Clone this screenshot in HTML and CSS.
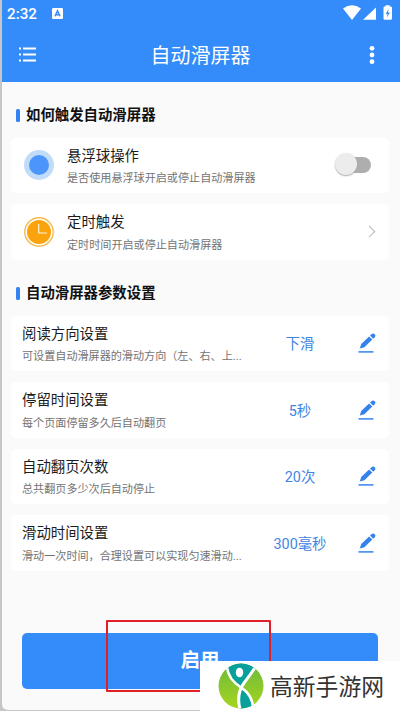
FILE: index.html
```html
<!DOCTYPE html>
<html lang="zh-CN">
<head>
<meta charset="utf-8">
<title>自动滑屏器</title>
<link rel="stylesheet" href="styles.css">
</head>
<body>
<svg class="defs" aria-hidden="true">
  <symbol id="pen" viewBox="0 0 18 22">
    <path d="M1.8 16.6 3.2 12 11.1 4.4 14.3 7.5 6.4 15.2Z M12 3.6 13.2 2.4Q15.1.7 16.7 2.2 18.2 3.8 16.5 5.6L15.2 6.8Z" fill="#3582ed"/>
    <path d="M.5 19.9h15" stroke="#3582ed" stroke-width="1.5"/>
  </symbol>
</svg>
<div class="screen">
  <header class="header">
    <div class="status">
      <span class="time">2:32</span>
      <svg class="badge" viewBox="0 0 11 11"><rect width="11" height="11" rx="1.3" fill="#fff"/><path d="M3 8.3 5.5 2.8 8 8.3M4 6.7h3" fill="none" stroke="#348bfa" stroke-width="1.5"/></svg>
      <svg class="signals" viewBox="0 0 50 16">
        <path d="M0 3.6Q9-3.2 18 3.6L9 15Z" fill="#fff"/>
        <path d="M20 14.8 33 2.4V14.8Z" fill="#fff"/>
        <path d="M42.5 1.6V.3h4.2v1.3h1q1.3 0 1.3 1.3v10.6q0 1.3-1.3 1.3h-5.9q-1.3 0-1.3-1.3V2.9q0-1.3 1.3-1.3Z" fill="#fff"/>
        <path d="M45.6 4 42.7 8.9h1.8L43.9 12.5l3-5h-1.9Z" fill="#348bfa"/>
      </svg>
    </div>
    <div class="bar">
      <svg class="list" viewBox="0 0 17 15"><path d="M4 1.5h13M4 7.5h13M4 13.5h13" stroke="#fff" stroke-width="2.2"/><path d="M0 1.5h2M0 7.5h2M0 13.5h2" stroke="#fff" stroke-width="2"/></svg>
      <h1>自动滑屏器</h1>
      <svg class="more" viewBox="0 0 6 20"><circle cx="3" cy="3.3" r="2.4"/><circle cx="3" cy="10" r="2.4"/><circle cx="3" cy="16.7" r="2.4"/></svg>
    </div>
  </header>
  <main>
    <h2 class="first">如何触发自动滑屏器</h2>
    <section class="cards">
      <div class="card trigger">
        <svg class="icon" viewBox="0 0 30 30"><circle cx="15" cy="15" r="15" fill="#c1dcf9"/><circle cx="15" cy="15" r="10" fill="#4c96fb"/></svg>
        <div class="copy"><h3>悬浮球操作</h3><p>是否使用悬浮球开启或停止自动滑屏器</p></div>
        <span class="switch"></span>
      </div>
      <div class="card trigger">
        <svg class="icon" viewBox="0 0 30 30"><circle cx="15" cy="15" r="14.2" fill="#fff" stroke="#f6b94a" stroke-width="1.4"/><circle cx="15" cy="15" r="12" fill="#fba30d"/><path d="M14.7 7v9H23" fill="none" stroke="#fff3d8" stroke-width="1.2"/></svg>
        <div class="copy"><h3>定时触发</h3><p>定时时间开启或停止自动滑屏器</p></div>
        <svg class="chevron" viewBox="0 0 8 13"><path d="M1 .8 6.8 6.5 1 12.2" fill="none" stroke="#bdbdbd" stroke-width="1.1"/></svg>
      </div>
    </section>
    <h2 class="second">自动滑屏器参数设置</h2>
    <section class="cards">
      <div class="card setting">
        <div class="copy"><h3>阅读方向设置</h3><p>可设置自动滑屏器的滑动方向（左、右、上...</p></div>
        <span class="value">下滑</span><svg class="pen"><use href="#pen"/></svg>
      </div>
      <div class="card setting">
        <div class="copy"><h3>停留时间设置</h3><p>每个页面停留多久后自动翻页</p></div>
        <span class="value">5秒</span><svg class="pen"><use href="#pen"/></svg>
      </div>
      <div class="card setting">
        <div class="copy"><h3>自动翻页次数</h3><p>总共翻页多少次后自动停止</p></div>
        <span class="value">20次</span><svg class="pen"><use href="#pen"/></svg>
      </div>
      <div class="card setting">
        <div class="copy"><h3>滑动时间设置</h3><p>滑动一次时间，合理设置可以实现匀速滑动...</p></div>
        <span class="value">300毫秒</span><svg class="pen"><use href="#pen"/></svg>
      </div>
    </section>
    <button class="start" type="button">启用</button>
  </main>
  <div class="marker"></div>
  <div class="watermark">
    <svg class="logo" viewBox="0 0 46 46">
      <defs>
        <clipPath id="disc"><circle cx="23" cy="23" r="22.5"/></clipPath>
        <linearGradient id="leaf" x1="0" y1="0" x2="0" y2="1"><stop offset="0" stop-color="#6dba3c"/><stop offset="1" stop-color="#a6d51f"/></linearGradient>
      </defs>
      <g clip-path="url(#disc)">
        <rect width="46" height="46" fill="url(#leaf)"/>
        <path d="M8 0H40Q35 12 24 24 12 17 8 0Z" fill="#07a09a"/>
        <path d="M24 26Q34 34 35 46H22Q18 37 24 26Z" fill="#07a09a"/>
        <path d="M9 4Q10 16 23 24.5 35 32 35 46" fill="none" stroke="#fff" stroke-width="2.6"/>
        <path d="M38 3Q33 11 26 20 18 31 22 46" fill="none" stroke="#fff" stroke-width="3"/>
        <ellipse cx="21.5" cy="9.5" rx="3.7" ry="4.8" fill="#fff"/>
      </g>
    </svg>
    <span>高新手游网</span>
  </div>
</div>
</body>
</html>
```
FILE: styles.css
```css
* { box-sizing: border-box; margin: 0; padding: 0; }
body {
  width: 400px;
  height: 711px;
  overflow: hidden;
  background: #c6c6c8;
  font-family: Roboto, "Noto Sans CJK SC", sans-serif;
}
.defs { position: absolute; width: 0; height: 0; }
.screen {
  position: relative;
  height: 711px;
  margin-left: 2px;
  background: #fafafa;
  border-bottom: 1px solid #c6c6c8;
  border-radius: 0 0 0 6px;
}
.header { height: 82px; background: #348bfa; color: #fff; }
.status { display: flex; align-items: center; height: 28px; padding: 0 7px 0 5px; }
.time { width: 45px; font-size: 15.2px; font-weight: 500; }
.badge { width: 11px; height: 11px; margin-top: -1px; }
.signals { width: 50px; height: 16px; margin: -2px 0 0 auto; }
.bar { display: flex; align-items: center; justify-content: space-between; height: 54px; padding: 0 25px 0 17px; }
.list { width: 17px; height: 15px; margin-top: -1px; }
.more { width: 6px; height: 20px; margin-top: -1px; fill: #fff; }
h1 { padding-top: 2px; font-size: 20px; line-height: 30px; font-weight: 400; margin-right: 4px; }
main { padding: 0 11px 0 9px; }
h2 { display: flex; align-items: center; gap: 6px; padding: 2px 0 0 5px; height: 20px; font-size: 14.4px; line-height: 20px; font-weight: 700; color: #111; }
h2::before { content: ""; width: 4px; height: 13px; margin-top: -2px; border-radius: 1.5px; background: #3582f5; }
.first { margin: 23px 0 12.5px; }
.second { margin: 23.5px 0 12.5px; }
.cards { display: grid; grid-auto-rows: 55.5px; gap: 11px; }
.card { display: flex; align-items: center; background: #fff; border-radius: 5px; }
.copy { min-width: 0; padding-top: 4px; }
h3 { font-size: 14.4px; line-height: 22px; font-weight: 400; color: #1c1c1c; }
p { margin-top: 1.5px; font-size: 11.1px; line-height: 20px; color: #737373; white-space: nowrap; }
.trigger { padding: 0 13px 0 13px; }
.icon { width: 30px; height: 30px; margin-right: 13px; }
.trigger .copy { flex: 1; }
.switch { position: relative; width: 32px; height: 16px; margin-right: 5px; border-radius: 8px; background: linear-gradient(90deg, transparent 12px, #aeaeae 12px); }
.switch::before { content: ""; position: absolute; left: -4px; top: -4px; width: 22px; height: 22px; border-radius: 50%; background: #ececec; box-shadow: 0 1px 1.5px #aaa; }
.chevron { width: 8px; height: 13px; }
.setting { padding: 0 13px 0 11px; }
.setting .copy { width: 220px; }
.value { width: 116px; padding-bottom: 1px; text-align: center; font-size: 14.4px; color: #3f85e3; }
.pen { width: 18px; height: 22px; }
.start { display: block; width: 356px; height: 56px; margin: 62.5px 0 0 11px; border: 0; border-radius: 5px; background: #348bfa; color: #fff; font: 700 19.5px/56px Roboto, "Noto Sans CJK SC", sans-serif; }
.marker { position: absolute; left: 104px; top: 620px; width: 165px; height: 72px; border: 2px solid #df2027; border-radius: 1px; }
.watermark { position: absolute; left: 198px; top: 661px; width: 200px; height: 50px; display: flex; align-items: center; background: #fff; }
.logo { width: 46px; height: 46px; margin: 0 6px 0 18px; }
.watermark span { font: 400 22.8px/34px "Noto Sans CJK SC", sans-serif; color: #333; }
```
